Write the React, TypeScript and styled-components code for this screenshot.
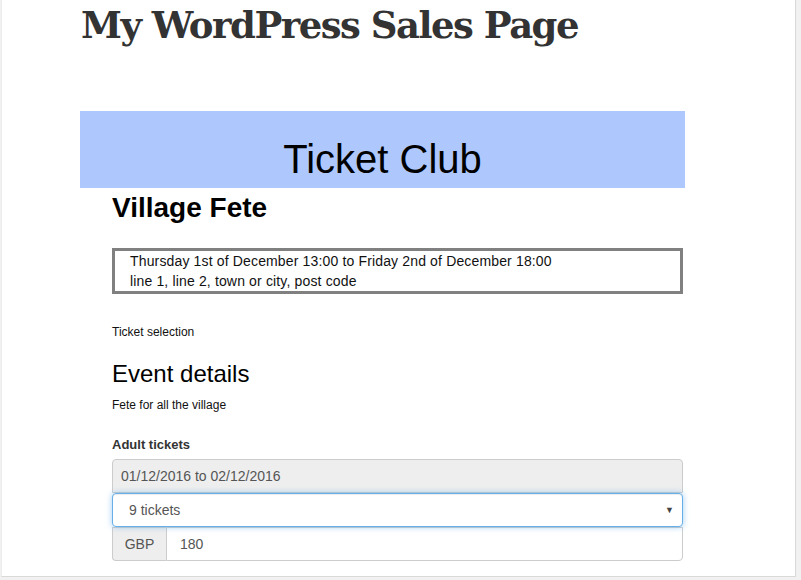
import React from "react";
import styled, { createGlobalStyle } from "styled-components";

const Global = createGlobalStyle`
  html, body { margin: 0; padding: 0; }
  body {
    background: #f1f1f1;
    font-family: "Liberation Sans", Arial, sans-serif;
    overflow: hidden;
  }
`;

const Panel = styled.div`
  box-sizing: border-box;
  margin-left: 1px;
  width: 795px;
  height: 577px;
  background: #ffffff;
  border-left: 1px solid #ececec;
  border-right: 1px solid #d9d9d9;
  border-bottom: 1px solid #d9d9d9;
  padding-left: 78px;
  overflow: hidden;
`;

const SiteTitle = styled.h1`
  margin: 0;
  font-family: "DejaVu Serif", "Liberation Serif", serif;
  font-weight: 700;
  font-size: 37px;
  line-height: 51px;
  color: #333333;
  letter-spacing: -1.5px;
  padding-left: 1px;
`;

const Club = styled.div`
  width: 605px;
  margin-top: 60px;
`;

const Banner = styled.div`
  background: #aec8fe;
  height: 77px;
  box-sizing: border-box;
  padding-top: 23px;
  text-align: center;
  font-size: 40px;
  line-height: 50px;
  color: #000;
`;

const Body = styled.div`
  padding: 0 2px 0 32px;
`;

const EventName = styled.h2`
  margin: 4px 0 0;
  font-size: 28px;
  line-height: 32px;
  font-weight: 700;
  color: #000;
`;

const InfoBox = styled.div`
  margin-top: 24px;
  border: 3px solid #808080;
  padding: 0 0 0 15px;
  font-size: 14px;
  line-height: 20px;
  letter-spacing: 0.15px;
  color: #111;
`;

const Small = styled.div<{ $top: number }>`
  margin-top: ${(p) => p.$top}px;
  font-size: 12px;
  line-height: 17px;
  color: #111;
`;

const Section = styled.div`
  margin-top: 19px;
  font-size: 24px;
  line-height: 28px;
  color: #000;
`;

const Label = styled.div`
  margin-top: 22px;
  font-size: 13px;
  line-height: 18px;
  font-weight: 700;
  color: #333;
`;

const Fields = styled.div`
  margin-top: 5px;
  display: flex;
  flex-direction: column;
  font-size: 14px;
  color: #555;
`;

const DateField = styled.div`
  box-sizing: border-box;
  height: 34px;
  display: flex;
  align-items: center;
  padding-left: 8px;
  background: #eeeeee;
  border: 1px solid #cccccc;
  border-radius: 4px 4px 0 0;
`;

const SelectBox = styled.div`
  box-sizing: border-box;
  height: 34px;
  display: flex;
  align-items: center;
  justify-content: space-between;
  padding: 0 8px 0 16px;
  background: #fff;
  border: 1px solid #66afe9;
  border-radius: 4px;
  box-shadow: inset 0 1px 1px rgba(0, 0, 0, 0.075),
    0 0 6px rgba(102, 175, 233, 0.6);
  position: relative;
  z-index: 1;
`;

const Caret = styled.span`
  font-size: 9px;
  color: #444;
`;

const PriceRow = styled.div`
  display: flex;
  height: 34px;
`;

const Addon = styled.div`
  box-sizing: border-box;
  width: 54px;
  display: flex;
  align-items: center;
  justify-content: center;
  background: #eeeeee;
  border: 1px solid #cccccc;
  border-right: 0;
  border-radius: 0 0 0 4px;
`;

const Amount = styled.div`
  box-sizing: border-box;
  flex: 1;
  display: flex;
  align-items: center;
  padding-left: 13px;
  background: #fff;
  border: 1px solid #cccccc;
  border-radius: 0 0 4px 0;
`;

export default function App() {
  return (
    <>
      <Global />
      <Panel>
        <SiteTitle>My WordPress Sales Page</SiteTitle>
        <Club>
          <Banner>Ticket Club</Banner>
          <Body>
            <EventName>Village Fete</EventName>
            <InfoBox>
              <div>Thursday 1st of December 13:00 to Friday 2nd of December 18:00</div>
              <div>line 1, line 2, town or city, post code</div>
            </InfoBox>
            <Small $top={30}>Ticket selection</Small>
            <Section>Event details</Section>
            <Small $top={9}>Fete for all the village</Small>
            <Label>Adult tickets</Label>
            <Fields>
              <DateField>01/12/2016 to 02/12/2016</DateField>
              <SelectBox>
                <span>9 tickets</span>
                <Caret>▼</Caret>
              </SelectBox>
              <PriceRow>
                <Addon>GBP</Addon>
                <Amount>180</Amount>
              </PriceRow>
            </Fields>
          </Body>
        </Club>
      </Panel>
    </>
  );
}
